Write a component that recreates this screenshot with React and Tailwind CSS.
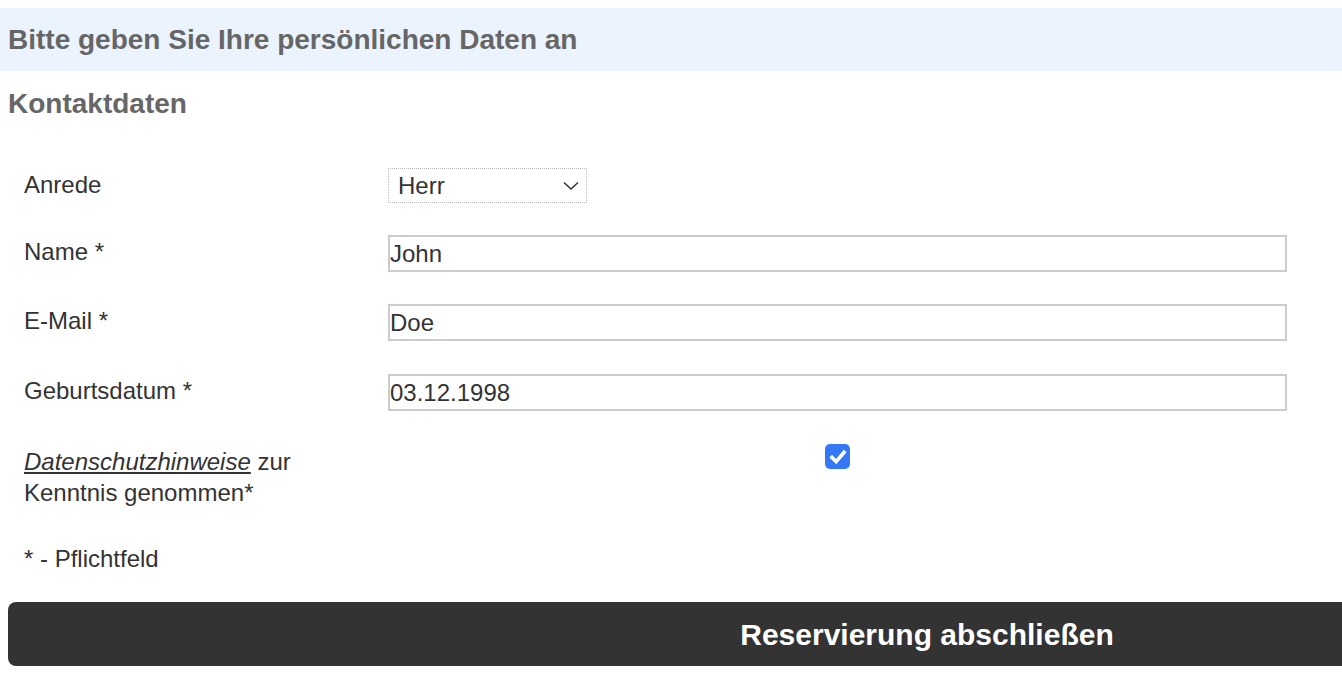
import { useState } from 'react';

const font = { fontFamily: '"Liberation Sans", Arial, Helvetica, sans-serif' };

export default function App() {
  const [anrede, setAnrede] = useState('Herr');
  const [name, setName] = useState('John');
  const [email, setEmail] = useState('Doe');
  const [birth, setBirth] = useState('03.12.1998');
  const [accepted, setAccepted] = useState(true);

  return (
    <div className="w-full min-h-screen overflow-hidden bg-white pt-2" style={font}>
      {/* Section header */}
      <div className="flex h-[63px] items-center bg-[#ebf3fe] px-2">
        <h1 className="text-[28px] font-bold leading-8 text-[#666666]">
          Bitte geben Sie Ihre persönlichen Daten an
        </h1>
      </div>

      <h2 className="mt-[17px] px-2 text-[28px] font-bold leading-8 text-[#666666]">Kontaktdaten</h2>

      <form className="mt-12 pl-6 text-[24px] leading-[31px] text-[#333333]" onSubmit={(e) => e.preventDefault()}>
        <Row label="Anrede">
          <div className="relative w-[199px]">
            <select
              value={anrede}
              onChange={(e) => setAnrede(e.target.value)}
              className="block h-[35px] w-full appearance-none border border-dotted border-[#b8b8b8] bg-white pl-[9px] text-[24px] leading-[31px] text-[#333333] outline-none"
            >
              <option>Herr</option>
              <option>Frau</option>
              <option>Divers</option>
            </select>
            <svg
              className="pointer-events-none absolute right-[8px] top-[11px] h-[12px] w-[16px]"
              viewBox="0 0 16 12"
              fill="none"
              stroke="#333333"
              strokeWidth="1.5"
            >
              <path d="M1 3.5 L8 10 L15 3.5" />
            </svg>
          </div>
        </Row>

        <Row label="Name *" className="mt-[32px]">
          <TextInput value={name} onChange={setName} />
        </Row>

        <Row label="E-Mail *" className="mt-[32px]">
          <TextInput value={email} onChange={setEmail} />
        </Row>

        <Row label="Geburtsdatum *" className="mt-[33px]">
          <TextInput value={birth} onChange={setBirth} />
        </Row>

        <div className="mt-[33px] flex items-start">
          <div className="w-[364px] pt-[2px]">
            <span className="italic underline">Datenschutzhinweise</span> zur
            <br />
            Kenntnis genommen*
          </div>
          <div className="flex w-[899px] justify-center">
            <button
              type="button"
              onClick={() => setAccepted(!accepted)}
              className={`flex h-[25px] w-[25px] items-center justify-center rounded-[5px] ${
                accepted ? 'bg-[#3478f6]' : 'border border-[#999999] bg-white'
              }`}
            >
              {accepted && (
                <svg viewBox="0 0 24 24" className="h-[22px] w-[22px]" fill="none" stroke="white" strokeWidth="4" strokeLinecap="square" strokeLinejoin="miter">
                  <path d="M5.5 12.5 L10 17 L18.5 7" />
                </svg>
              )}
            </button>
          </div>
        </div>

        <p className="mt-[35px]">* - Pflichtfeld</p>
      </form>

      <div className="mt-[28px] pl-2">
        <button
          type="submit"
          className="flex h-[64px] w-[1838px] items-center justify-center rounded-lg bg-[#333333] text-[30px] font-bold text-white"
        >
          Reservierung abschließen
        </button>
      </div>
    </div>
  );
}

function Row({ label, children, className = '' }) {
  return (
    <div className={`flex items-start ${className}`}>
      <label className="w-[364px] pt-[1px]">{label}</label>
      <div className="w-[899px]">{children}</div>
    </div>
  );
}

function TextInput({ value, onChange }) {
  return (
    <input
      type="text"
      value={value}
      onChange={(e) => onChange(e.target.value)}
      className="block h-[37px] w-full border-2 border-[#cccccc] bg-white px-0 text-[24px] text-[#333333] outline-none"
    />
  );
}
